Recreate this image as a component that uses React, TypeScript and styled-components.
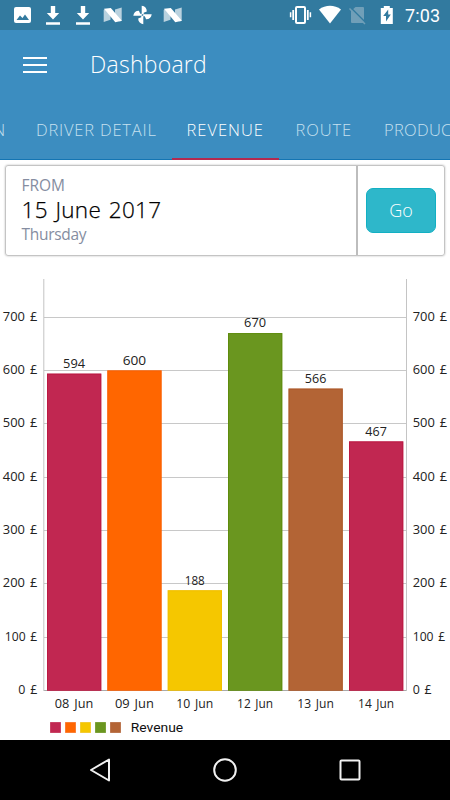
import React from "react";
import styled, { createGlobalStyle } from "styled-components";

const GlobalStyle = createGlobalStyle`
  *, *::before, *::after { box-sizing: border-box; }
  body { margin: 0; background: #fff; font-family: "Open Sans", "Noto Sans", sans-serif; }
`;

const Screen = styled.div`
  display: flex;
  flex-direction: column;
  width: 450px;
  height: 800px;
  overflow: hidden;
  background: #fff;
`;

const StatusBar = styled.header`
  display: flex;
  align-items: center;
  height: 30px;
  padding: 0 9px 0 7px;
  background: #327a9f;
  color: #fff;
`;

const StatusIcon = styled.svg<{ $w?: number }>`
  flex: none;
  display: block;
  width: ${({ $w = 30 }) => $w}px;
  height: 30px;
`;

const Spacer = styled.div`
  flex: 1;
`;

const Clock = styled.span`
  width: 36px;
  font: 400 18px/31px Roboto, sans-serif;
  letter-spacing: 0.1px;
  white-space: nowrap;
`;

const Toolbar = styled.div`
  display: flex;
  align-items: center;
  height: 70px;
  padding-left: 23px;
  background: #3c8dc0;
`;

const MenuButton = styled.button`
  display: flex;
  flex-direction: column;
  gap: 4.5px;
  width: 24px;
  padding: 0;
  border: 0;
  background: none;
`;

const MenuLine = styled.span`
  height: 2.5px;
  background: #fff;
`;

const Title = styled.h1`
  margin: -2px 0 0 43px;
  color: #fff;
  font-size: 23px;
  font-weight: 300;
  line-height: 30px;
  letter-spacing: 0.25px;
`;

const Tabs = styled.nav`
  display: flex;
  flex: none;
  height: 60px;
  overflow: hidden;
  background: #3c8dc0;
  box-shadow: inset 0 -1px #1475b3;
`;

const Tab = styled.div<{ $width: number; $active?: boolean; $end?: boolean; $inset?: number; $spacing?: number }>`
  display: flex;
  flex: none;
  justify-content: ${({ $end }) => ($end ? "flex-end" : "flex-start")};
  width: ${({ $width }) => $width}px;
  padding: ${({ $end, $inset = 15 }) => ($end ? `0 ${$inset}px 0 0` : `0 0 0 ${$inset}px`)};
  border-bottom: ${({ $active }) => ($active ? "2px solid #b32a50" : "0")};
  color: ${({ $active }) => ($active ? "#fff" : "#c6e0ef")};
  font-size: 16.5px;
  font-weight: 300;
  line-height: 60px;
  letter-spacing: ${({ $spacing = 0.8 }) => $spacing}px;
  white-space: nowrap;
`;

const FilterCard = styled.section`
  display: flex;
  flex: none;
  height: 91px;
  margin: 4.5px 5px 0.5px;
  border: 1px solid #c4c4c4;
  border-radius: 3px;
  box-shadow: 0 0 2px rgba(0, 0, 0, 0.3);
`;

const DateField = styled.div`
  display: flex;
  flex-direction: column;
  width: 352px;
  padding: 9.5px 0 0 15.5px;
  border-right: 2px solid #bdbdbd;
`;

const Caption = styled.span<{ $spacing: number }>`
  color: #858da1;
  font-size: 15.5px;
  font-weight: 400;
  line-height: 21px;
  letter-spacing: ${({ $spacing }) => $spacing}px;
`;

const DateValue = styled.span`
  color: #000;
  font-size: 22.5px;
  font-weight: 300;
  line-height: 28px;
  letter-spacing: 0.3px;
  word-spacing: 1.5px;
  -webkit-text-stroke: 0.25px #000;
`;

const Action = styled.div`
  display: flex;
  flex: 1;
  align-items: center;
  justify-content: center;
`;

const GoButton = styled.button`
  width: 70px;
  height: 45px;
  padding: 0;
  border: 1px solid #12b0c3;
  border-radius: 7px;
  background: #2eb7ca;
  color: #fff;
  font: 300 18px/42px "Open Sans", sans-serif;
`;

const Chart = styled.svg`
  display: block;
  flex: none;
  width: 450px;
  height: 484px;
`;

const ChartText = styled.text`
  fill: #222;
  font: 400 11.8px "Open Sans", sans-serif;
  word-spacing: 1.5px;
`;

const LegendText = styled.text`
  fill: #111;
  font: 400 13.5px Roboto, sans-serif;
`;

const NavBar = styled.footer`
  display: flex;
  flex: none;
  align-items: center;
  justify-content: center;
  gap: 95px;
  height: 60px;
  background: #000;
`;

const NavIcon = styled.svg`
  display: block;
  width: 30px;
  height: 30px;
  fill: none;
  stroke: #f1f1f1;
  stroke-width: 2;
  stroke-linejoin: round;
`;

const DownloadIcon = () => (
  <StatusIcon viewBox="0 0 30 30" fill="#fff">
    <path d="M13.8 6h4.4v7H22.2L16 19.5 9.8 13h4zM9 22.3h14v2.4H9z" />
  </StatusIcon>
);

const NougatIcon = () => (
  <StatusIcon viewBox="0 0 30 30">
    <path d="M6.700 10 8 9l5.500 6v4.700L6.700 22zM18 9.500l6.700-2v13.200l-2 .8-4.700-6z" fill="#b9d2df" />
    <path d="M7 8.800 13.800 8 24.900 20.800 18.300 22.200z" fill="#fff" />
  </StatusIcon>
);

const colors = ["#c12751", "#ff6600", "#f5c700", "#6a961f", "#b36435"];
const edges = ["#b90f39", "#f85b00", "#eebb00", "#578500", "#a85020"];
const baseY = 690.5;
const unit = 0.5335;

const bars = [
  { day: "08 Jun", value: 594, x: 47, labelY: 368, labelW: 22, dayW: 38.5 },
  { day: "09 Jun", value: 600, x: 107.3, labelY: 364.7, labelW: 23.5, dayW: 39 },
  { day: "10 Jun", value: 188, x: 167.7, labelY: 585, labelW: 20, dayW: 37 },
  { day: "12 Jun", value: 670, x: 228, labelY: 327.3, labelW: 22, dayW: 36 },
  { day: "13 Jun", value: 566, x: 288.5, labelY: 383, labelW: 21.5, dayW: 36.5 },
  { day: "14 Jun", value: 467, x: 349, labelY: 436.3, labelW: 21.5, dayW: 36 },
];

const RevenueChart = () => (
  <Chart viewBox="0 256 450 484">
    {[0, 100, 200, 300, 400, 500, 600, 700].map((v) => {
      const y = Math.round(baseY - v * unit - 0.5) + 0.5;
      const width = v === 0 ? 19 : v === 100 ? 32.5 : 34.5;
      return (
        <g key={v}>
          <path d={`M44 ${y}H406`} stroke={v === 0 ? "#aaa" : "#c8c8c8"} />
          <ChartText x={37.3} y={y + 3.5} textAnchor="end" textLength={width} lengthAdjust="spacingAndGlyphs">{v} £</ChartText>
          <ChartText x={412.7} y={y + 3.5} textLength={width} lengthAdjust="spacingAndGlyphs">{v} £</ChartText>
        </g>
      );
    })}
    <path d="M43.8 279V691M406.5 279V691" stroke="#c4c4c4" />
    {bars.map((b, i) => {
      const top = baseY - b.value * unit;
      const center = b.x + 27.1;
      return (
        <g key={b.day}>
          <rect x={b.x} y={top} width={54.3} height={baseY - top} fill={colors[i % 5]} />
          <rect x={b.x + 0.5} y={top + 0.5} width={53.3} height={baseY - top - 0.5} fill="none" stroke={edges[i % 5]} strokeOpacity={0.6} />
          <ChartText x={center} y={b.labelY} textAnchor="middle" textLength={b.labelW} lengthAdjust="spacingAndGlyphs">{b.value}</ChartText>
          <ChartText x={center} y={707.5} textAnchor="middle" textLength={b.dayW} lengthAdjust="spacingAndGlyphs">{b.day}</ChartText>
        </g>
      );
    })}
    {colors.map((c, i) => (
      <rect key={c} x={50.5 + i * 15} y={722.5} width={10} height={10} fill={c} stroke={edges[i]} strokeOpacity={0.6} />
    ))}
    <LegendText x={130.7} y={732.3} textLength={52.5} lengthAdjust="spacingAndGlyphs">Revenue</LegendText>
  </Chart>
);

export default function App() {
  return (
    <>
      <GlobalStyle />
      <Screen>
        <StatusBar>
          <StatusIcon viewBox="0 0 30 30">
            <rect x="7" y="7" width="17" height="16" rx="2" fill="#fff" />
            <path d="m9.5 20 3.5-4.5 2.5 2.5 2.5-3.5 4 5.5z" fill="#327a9f" />
          </StatusIcon>
          <DownloadIcon />
          <DownloadIcon />
          <NougatIcon />
          <StatusIcon viewBox="0 0 30 30" fill="#fff">
            {[0, 90, 180, 270].map((a) => (
              <path key={a} transform={`rotate(${a} 15.5 15)`} d="M14.7 14.3V5.8c3.3.4 5.1 2.4 5.1 5.6l-3.1 1.3v1.6z" />
            ))}
          </StatusIcon>
          <NougatIcon />
          <Spacer />
          <StatusIcon viewBox="0 0 30 30" fill="none" stroke="#fff">
            <rect x="11" y="7" width="9" height="16" rx="1" strokeWidth="2" />
            <path d="M8.2 10v10M22.8 10v10" strokeWidth="1.8" />
            <path d="M5.6 12.3v5M25.4 12.3v5" strokeWidth="1.5" />
          </StatusIcon>
          <StatusIcon viewBox="0 0 30 30" fill="#fff">
            <path d="M4 9.5C10.5 4.6 19.5 4.6 26 9.5L15 23.5z" />
          </StatusIcon>
          <StatusIcon $w={27} viewBox="0 0 27 30">
            <path d="M10.5 7h7.5q1 0 1 1v14q0 1-1 1H7q-1 0-1-1V11z" fill="#709fb8" />
            <path d="m6 8 15 15" stroke="#327a9f" strokeWidth="1.7" />
            <path d="m4.5 8.5 15.5 15.5" stroke="#709fb8" strokeWidth="1.5" />
          </StatusIcon>
          <StatusIcon $w={33} viewBox="0 0 33 30">
            <path d="M8.8 8h3V6h6v2h3v16h-12z" fill="#fff" />
            <path d="m16.2 9.5-5 6.5h2.8v5.5l4.8-7h-2.6z" fill="#327a9f" />
          </StatusIcon>
          <Clock>7:03</Clock>
        </StatusBar>
        <Toolbar>
          <MenuButton aria-label="Menu">
            <MenuLine />
            <MenuLine />
            <MenuLine />
          </MenuButton>
          <Title>Dashboard</Title>
        </Toolbar>
        <Tabs>
          <Tab $width={21} $end>N</Tab>
          <Tab $width={151}>DRIVER DETAIL</Tab>
          <Tab $width={107} $active $inset={14.5} $spacing={1}>REVENUE</Tab>
          <Tab $width={90} $inset={16.5} $spacing={0.9}>ROUTE</Tab>
          <Tab $width={120} $spacing={0.3}>PRODUCT</Tab>
        </Tabs>
        <FilterCard>
          <DateField>
            <Caption $spacing={0}>FROM</Caption>
            <DateValue>15 June 2017</DateValue>
            <Caption $spacing={-0.3}>Thursday</Caption>
          </DateField>
          <Action>
            <GoButton>Go</GoButton>
          </Action>
        </FilterCard>
        <RevenueChart />
        <NavBar>
          <NavIcon viewBox="0 0 30 30">
            <path d="M24 4.5v21L6 15z" />
          </NavIcon>
          <NavIcon viewBox="0 0 30 30">
            <circle cx="15" cy="15" r="10.8" />
          </NavIcon>
          <NavIcon viewBox="0 0 30 30">
            <rect x="5.5" y="5.5" width="19" height="19" rx="1" />
          </NavIcon>
        </NavBar>
      </Screen>
    </>
  );
}
